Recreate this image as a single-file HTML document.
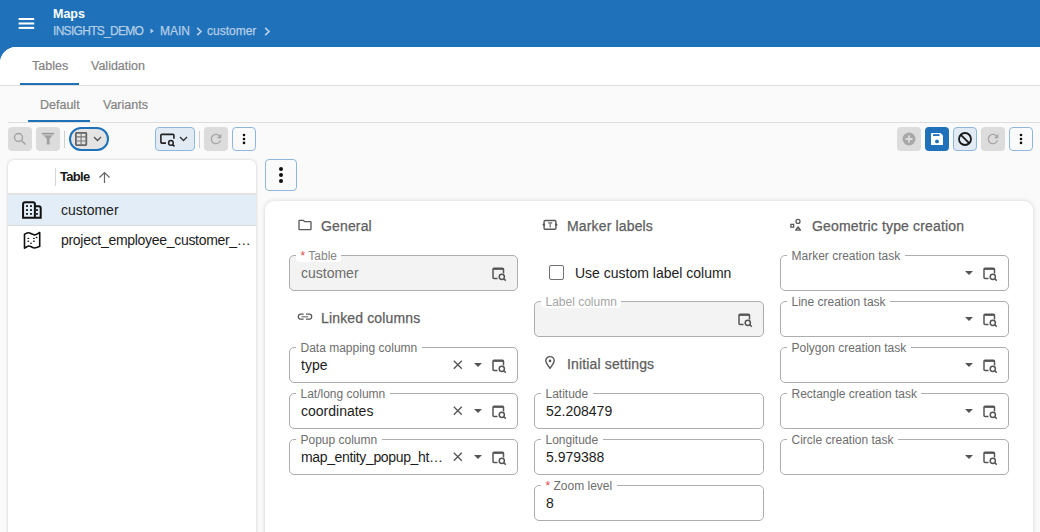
<!DOCTYPE html>
<html><head><meta charset="utf-8">
<style>
*{box-sizing:border-box;margin:0;padding:0}
html,body{width:1040px;height:532px;overflow:hidden;background:#1f72b9;font-family:"Liberation Sans",sans-serif;position:relative}
.abs{position:absolute}
svg{position:absolute;overflow:visible}
.t{position:absolute;white-space:nowrap;line-height:1}
.btn{position:absolute;width:24px;height:24px;border-radius:4px;background:#dcdcdc}
.fld{position:absolute;width:229px;height:36px;border:1px solid #adadad;border-radius:5px;background:#fff}
.fld.ro{background:#f3f3f3}
.lbl{position:absolute;left:6px;top:-5.5px;height:11px;padding:0 4.3px 0 4.5px;background:#fff;border-radius:4px;font-size:12px;line-height:11px;color:#6e6e6e;white-space:nowrap}
.lbl span{position:relative;top:0px}
.val{position:absolute;left:11px;top:10px;font-size:14px;line-height:1;color:#1c1c1c;white-space:nowrap}
.sec{position:absolute;font-size:14px;color:#5e5e5e;white-space:nowrap;line-height:1;-webkit-text-stroke:0.25px #5e5e5e;margin-top:-1px;letter-spacing:0.15px}
</style></head><body>

<div class="abs" style="left:0;top:47px;width:1040px;height:485px;background:#fafafa;border-top-left-radius:16px"></div>
<div class="abs" style="left:0;top:47px;width:1040px;height:39px;background:#fff;border-top-left-radius:16px;border-bottom:1px solid #dedede"></div>
<svg style="left:18px;top:17px" width="17" height="13"><rect x="0.6" y="1" width="15.6" height="2" fill="#fff"/><rect x="0.6" y="5.5" width="15.6" height="2" fill="#fff"/><rect x="0.6" y="9.9" width="15.6" height="2" fill="#fff"/></svg>
<div class="t" style="left:53px;top:7.5px;font-size:12.5px;font-weight:bold;color:#fff">Maps</div>
<div class="t" style="left:53px;top:25px;font-size:12px;color:#b5cde7;letter-spacing:-0.7px;-webkit-text-stroke:0.25px #b5cde7">INSIGHTS_DEMO</div>
<svg style="left:150px;top:28px" width="4" height="6"><path d="M0.5 0.5 L3.8 3 L0.5 5.5Z" fill="#b5cde7"/></svg>
<div class="t" style="left:160px;top:25px;font-size:12px;color:#b5cde7;-webkit-text-stroke:0.25px #b5cde7">MAIN</div>
<svg style="left:196px;top:27px" width="6" height="9"><path d="M1.2 0.8 L5 4.5 L1.2 8.2" stroke="#b5cde7" stroke-width="1.7" fill="none"/></svg>
<div class="t" style="left:207px;top:25px;font-size:12px;color:#b5cde7;-webkit-text-stroke:0.25px #b5cde7">customer</div>
<svg style="left:264px;top:27px" width="6" height="9"><path d="M1.2 0.8 L5 4.5 L1.2 8.2" stroke="#b5cde7" stroke-width="1.7" fill="none"/></svg>
<div class="t" style="left:32px;top:60px;font-size:12.5px;color:#838383;-webkit-text-stroke:0.2px #838383">Tables</div>
<div class="t" style="left:91px;top:60px;font-size:12.5px;color:#838383;-webkit-text-stroke:0.2px #838383">Validation</div>
<div class="abs" style="left:20px;top:83px;width:59px;height:2px;background:#1f72b9"></div>
<div class="t" style="left:40px;top:99px;font-size:12.5px;color:#838383;-webkit-text-stroke:0.2px #838383">Default</div>
<div class="t" style="left:103px;top:99px;font-size:12.5px;color:#838383;-webkit-text-stroke:0.2px #838383">Variants</div>
<div class="abs" style="left:28px;top:120px;width:62px;height:2px;background:#1f72b9"></div>
<div class="abs" style="left:8px;top:122px;width:1032px;height:1px;background:#dedede"></div>
<div class="btn" style="left:8px;top:127px"></div>
<svg style="left:8px;top:127px" width="24" height="24"><circle cx="10.5" cy="10.5" r="4" stroke="#a3a3a3" stroke-width="1.4" fill="none"/><path d="M13.5 13.5 L17.5 17.5" stroke="#a3a3a3" stroke-width="1.6"/></svg>
<div class="btn" style="left:36px;top:127px"></div>
<svg style="left:36px;top:127px" width="24" height="24"><rect x="5.9" y="5.9" width="12.1" height="1.4" fill="#979797"/><rect x="6.4" y="7.3" width="11.1" height="1.2" fill="#bcbcbc"/><path d="M7.6 8.5 H16.4 L13.6 11.8 V17.6 H10.8 V11.8Z" fill="#a0a0a0"/></svg>
<div class="abs" style="left:64px;top:131px;width:1px;height:17px;background:#cfcfcf"></div>
<div class="abs" style="left:69px;top:127px;width:40px;height:24px;border-radius:12px;border:2.5px solid #1f72b9;background:#e4e4e4"></div>
<svg style="left:75px;top:132px" width="13" height="14"><rect x="0.9" y="0.9" width="10.4" height="12.2" rx="0.5" fill="none" stroke="#666" stroke-width="1.8"/><path d="M0.8 4.9 H11.4 M0.8 9 H11.4 M6.1 0.8 V13" stroke="#777" stroke-width="1.1"/></svg>
<svg style="left:93px;top:136px" width="9" height="6"><path d="M1 1 L4.5 4.5 L8 1" stroke="#555" stroke-width="1.4" fill="none"/></svg>
<div class="abs" style="left:155px;top:127px;width:40px;height:24px;border-radius:4px;border:1px solid #8fb7de;background:#e2ebf4"></div>
<svg style="left:156px;top:130px" width="24" height="20"><path d="M10 13.1 H5.8 Q4.9 13.1 4.9 12.2 V5.3 Q4.9 4.4 5.8 4.4 H17 Q17.9 4.4 17.9 5.3 V8.8" stroke="#222" stroke-width="1.6" fill="none"/><circle cx="14.9" cy="12.9" r="2.3" stroke="#222" stroke-width="1.5" fill="none"/><path d="M16.6 14.6 L18.5 16.4" stroke="#222" stroke-width="1.5"/></svg>
<svg style="left:179px;top:136px" width="9" height="6"><path d="M1 1 L4.5 4.5 L8 1" stroke="#333" stroke-width="1.4" fill="none"/></svg>
<div class="abs" style="left:199px;top:131px;width:1px;height:17px;background:#cfcfcf"></div>
<div class="btn" style="left:204px;top:127px"></div>
<svg style="left:208px;top:131px" width="16" height="16" viewBox="0 0 24 24"><path d="M17.65 6.35C16.2 4.9 14.21 4 12 4c-4.42 0-7.99 3.58-7.99 8s3.57 8 7.99 8c3.73 0 6.84-2.550 7.73-6h-2.08c-.82 2.33-3.04 4-5.65 4-3.31 0-6-2.690-6-6s2.69-6 6-6c1.66 0 3.14.69 4.22 1.78L13 11h7V4l-2.35 2.35z" fill="#a8a8a8"/></svg>
<div class="abs" style="left:232px;top:127px;width:24px;height:24px;border-radius:4px;border:1px solid #8fb7de;background:transparent"></div>
<svg style="left:241px;top:134px" width="6" height="14"><circle cx="3" cy="1" r="1.3" fill="#111"/><circle cx="3" cy="4.95" r="1.3" fill="#111"/><circle cx="3" cy="8.9" r="1.3" fill="#111"/></svg>
<div class="btn" style="left:897px;top:127px"></div>
<svg style="left:897px;top:127px" width="24" height="24"><circle cx="12" cy="12" r="6.5" fill="#a8a8a8"/><path d="M12 8.5 V15.5 M8.5 12 H15.5" stroke="#dcdcdc" stroke-width="1.8"/></svg>
<div class="btn" style="left:925px;top:127px;background:#1f72b9"></div>
<svg style="left:925px;top:127px" width="24" height="24"><path d="M6 6.5 Q6 6 6.5 6 H15.5 L18 8.5 V17.5 Q18 18 17.5 18 H6.5 Q6 18 6 17.5Z" fill="#fff"/><rect x="8" y="7.2" width="6.5" height="1.8" fill="#1f72b9"/><circle cx="12" cy="14.4" r="1.9" fill="#1f72b9"/></svg>
<div class="abs" style="left:953px;top:127px;width:24px;height:24px;border-radius:4px;border:1px solid #8fb7de;background:#e2ebf4"></div>
<svg style="left:953px;top:127px" width="24" height="24"><circle cx="12" cy="12" r="6" stroke="#1a1a1a" stroke-width="1.8" fill="none"/><path d="M7.8 7.8 L16.2 16.2" stroke="#1a1a1a" stroke-width="1.8"/></svg>
<div class="btn" style="left:981px;top:127px"></div>
<svg style="left:985px;top:131px" width="16" height="16" viewBox="0 0 24 24"><path d="M17.65 6.35C16.2 4.9 14.21 4 12 4c-4.42 0-7.99 3.58-7.99 8s3.57 8 7.99 8c3.73 0 6.84-2.550 7.73-6h-2.08c-.82 2.33-3.04 4-5.65 4-3.31 0-6-2.690-6-6s2.69-6 6-6c1.66 0 3.14.69 4.22 1.78L13 11h7V4l-2.35 2.35z" fill="#a8a8a8"/></svg>
<div class="abs" style="left:1009px;top:127px;width:24px;height:24px;border-radius:4px;border:1px solid #8fb7de;background:transparent"></div>
<svg style="left:1018px;top:134px" width="6" height="14"><circle cx="3" cy="1" r="1.3" fill="#111"/><circle cx="3" cy="4.95" r="1.3" fill="#111"/><circle cx="3" cy="8.9" r="1.3" fill="#111"/></svg>
<div class="abs" style="left:8px;top:160px;width:248px;height:400px;background:#fff;border-radius:6px;box-shadow:0 0 3px rgba(0,0,0,.2)"></div>
<div class="abs" style="left:55px;top:168px;width:1px;height:18px;background:#d6d6d6"></div>
<div class="t" style="left:60px;top:170px;font-size:13px;font-weight:bold;color:#1a1a1a;letter-spacing:-0.7px">Table</div>
<svg style="left:98px;top:171px" width="13" height="13"><path d="M6.5 12 V1.5 M1.5 6.5 L6.5 1.5 L11.5 6.5" stroke="#666" stroke-width="1.2" fill="none"/></svg>
<div class="abs" style="left:8px;top:193px;width:248px;height:2px;background:#e2e2e2"></div>
<div class="abs" style="left:8px;top:195px;width:248px;height:30px;background:#e3edf7"></div>
<div class="abs" style="left:8px;top:225px;width:248px;height:1px;background:#dcdcdc"></div>
<svg style="left:20px;top:199px" width="24" height="22"><path d="M3.07 18.65 V5.3 A2 2 0 0 1 5.07 3.3 H12.9 A2 2 0 0 1 14.9 5.3 V18.65 M14.9 7.2 H18.7 A2 2 0 0 1 20.7 9.2 V18.65 M2.07 18.65 H21.7" stroke="#111" stroke-width="2" fill="none"/><rect x="6.05" y="6.05" width="1.9" height="1.9" rx="0.4" fill="#111"/><rect x="10.05" y="6.05" width="1.9" height="1.9" rx="0.4" fill="#111"/><rect x="6.05" y="10.05" width="1.9" height="1.9" rx="0.4" fill="#111"/><rect x="10.05" y="10.05" width="1.9" height="1.9" rx="0.4" fill="#111"/><rect x="6.05" y="13.950000000000001" width="1.9" height="1.9" rx="0.4" fill="#111"/><rect x="10.05" y="13.950000000000001" width="1.9" height="1.9" rx="0.4" fill="#111"/><rect x="16.05" y="10.05" width="1.9" height="1.9" rx="0.4" fill="#111"/><rect x="16.05" y="13.950000000000001" width="1.9" height="1.9" rx="0.4" fill="#111"/></svg>
<div class="t" style="left:61px;top:203px;font-size:14px;color:#1c1c1c">customer</div>
<svg style="left:20px;top:229px" width="24" height="22"><path d="M4.5 19.2 V5.3 C6 4.5 7.3 3.6 8.5 3.7 C10.5 3.9 12.5 5.8 14.5 5.9 C16.5 6 18.2 4.2 19.7 3.5 V17.4 C18.2 18.1 16.5 19 14.5 19 C12.5 19 11 17 9 17 C7.5 17 6 18.5 4.5 19.2 Z" stroke="#111" stroke-width="1.6" fill="none" stroke-linejoin="round"/><ellipse cx="8.3" cy="9.4" rx="0.95" ry="0.7" fill="#111"/><ellipse cx="13.9" cy="9.4" rx="0.95" ry="0.7" fill="#111"/><ellipse cx="8.3" cy="12.3" rx="0.95" ry="0.7" fill="#111"/><ellipse cx="13.9" cy="12.3" rx="0.95" ry="0.7" fill="#111"/><ellipse cx="11" cy="14.2" rx="0.95" ry="0.7" fill="#111"/><ellipse cx="16.6" cy="8.5" rx="0.95" ry="0.7" fill="#111"/></svg>
<div class="t" style="left:61px;top:231px;font-size:14px;line-height:18px;color:#1c1c1c;width:191px;overflow:hidden;text-overflow:ellipsis;letter-spacing:-0.3px">project_employee_customer_map</div>
<div class="abs" style="left:265px;top:159px;width:32px;height:32px;border-radius:4px;border:1px solid #8fb7de;background:transparent"></div>
<svg style="left:278px;top:166px" width="6" height="18"><circle cx="3" cy="3" r="2" fill="#111"/><circle cx="3" cy="9" r="2" fill="#111"/><circle cx="3" cy="15" r="2" fill="#111"/></svg>
<div class="abs" style="left:265px;top:201px;width:768px;height:400px;background:#fff;border-radius:9px;box-shadow:0 0 4px rgba(0,0,0,.17)"></div>
<div class="sec" style="left:321px;top:220px">General</div>
<svg style="left:297px;top:217px" width="16" height="16" viewBox="0 0 24 24"><path d="M9.17 6l2 2H20v10H4V6h5.17M10 4H4c-1.1 0-1.99.9-1.99 2L2 18c0 1.1.9 2 2 2h16c1.1 0 2-.9 2-2V8c0-1.1-.9-2-2-2h-8l-2-2z" fill="#595959"/></svg>
<div class="fld ro" style="left:289px;top:255px;width:229px"><div class="lbl" style="color:#858585;"><span><span style="color:#e5484d">* </span>Table</span></div><div class="val" style="color:#6c6c6c;">customer</div></div>
<svg style="left:492px;top:267px" width="15" height="14"><path d="M5.5 11.5 H2 Q1 11.5 1 10.5 V2.2 Q1 1.2 2 1.2 H10.5 Q11.5 1.2 11.5 2.2 V6.6" stroke="#555" stroke-width="1.5" fill="none"/><path d="M1.3 2.3 H11.2" stroke="#555" stroke-width="1.2"/><circle cx="9.8" cy="9.8" r="2.6" stroke="#555" stroke-width="1.5" fill="none"/><path d="M11.7 11.7 L13.8 13.6" stroke="#555" stroke-width="1.5"/></svg>
<div class="sec" style="left:321px;top:312px">Linked columns</div>
<svg style="left:292px;top:306px" width="24" height="22"><path d="M11.6 8.2 H8.8 A2.5 2.5 0 0 0 8.8 13.2 H11.6 M14 8.2 H17.2 A2.5 2.5 0 0 1 17.2 13.2 H14" stroke="#595959" stroke-width="1.3" fill="none"/><path d="M9.6 10.75 H16.2" stroke="#777" stroke-width="1.2"/></svg>
<div class="fld" style="left:289px;top:347px;width:229px"><div class="lbl" style=""><span>Data mapping column</span></div><div class="val" style="">type</div></div>
<svg style="left:453px;top:360px" width="10" height="10"><path d="M0.8 0.8 L8.8 8.8 M8.8 0.8 L0.8 8.8" stroke="#555" stroke-width="1.3"/></svg>
<svg style="left:474px;top:363px" width="8" height="5"><path d="M0 0 H8 L4 4Z" fill="#555"/></svg>
<svg style="left:492px;top:359px" width="15" height="14"><path d="M5.5 11.5 H2 Q1 11.5 1 10.5 V2.2 Q1 1.2 2 1.2 H10.5 Q11.5 1.2 11.5 2.2 V6.6" stroke="#555" stroke-width="1.5" fill="none"/><path d="M1.3 2.3 H11.2" stroke="#555" stroke-width="1.2"/><circle cx="9.8" cy="9.8" r="2.6" stroke="#555" stroke-width="1.5" fill="none"/><path d="M11.7 11.7 L13.8 13.6" stroke="#555" stroke-width="1.5"/></svg>
<div class="fld" style="left:289px;top:393px;width:229px"><div class="lbl" style=""><span>Lat/long column</span></div><div class="val" style="">coordinates</div></div>
<svg style="left:453px;top:406px" width="10" height="10"><path d="M0.8 0.8 L8.8 8.8 M8.8 0.8 L0.8 8.8" stroke="#555" stroke-width="1.3"/></svg>
<svg style="left:474px;top:409px" width="8" height="5"><path d="M0 0 H8 L4 4Z" fill="#555"/></svg>
<svg style="left:492px;top:405px" width="15" height="14"><path d="M5.5 11.5 H2 Q1 11.5 1 10.5 V2.2 Q1 1.2 2 1.2 H10.5 Q11.5 1.2 11.5 2.2 V6.6" stroke="#555" stroke-width="1.5" fill="none"/><path d="M1.3 2.3 H11.2" stroke="#555" stroke-width="1.2"/><circle cx="9.8" cy="9.8" r="2.6" stroke="#555" stroke-width="1.5" fill="none"/><path d="M11.7 11.7 L13.8 13.6" stroke="#555" stroke-width="1.5"/></svg>
<div class="fld" style="left:289px;top:439px;width:229px"><div class="lbl" style=""><span>Popup column</span></div><div class="val" style=""><span style="letter-spacing:-0.35px">map_entity_popup_ht…</span></div></div>
<svg style="left:453px;top:452px" width="10" height="10"><path d="M0.8 0.8 L8.8 8.8 M8.8 0.8 L0.8 8.8" stroke="#555" stroke-width="1.3"/></svg>
<svg style="left:474px;top:455px" width="8" height="5"><path d="M0 0 H8 L4 4Z" fill="#555"/></svg>
<svg style="left:492px;top:451px" width="15" height="14"><path d="M5.5 11.5 H2 Q1 11.5 1 10.5 V2.2 Q1 1.2 2 1.2 H10.5 Q11.5 1.2 11.5 2.2 V6.6" stroke="#555" stroke-width="1.5" fill="none"/><path d="M1.3 2.3 H11.2" stroke="#555" stroke-width="1.2"/><circle cx="9.8" cy="9.8" r="2.6" stroke="#555" stroke-width="1.5" fill="none"/><path d="M11.7 11.7 L13.8 13.6" stroke="#555" stroke-width="1.5"/></svg>
<div class="sec" style="left:567px;top:220px">Marker labels</div>
<svg style="left:538px;top:214px" width="24" height="22"><rect x="6.1" y="6.5" width="11.8" height="8.7" rx="1" stroke="#595959" stroke-width="1.4" fill="none"/><path d="M4.3 10.8 L5.8 9.3 L7.3 10.8 L5.8 12.3Z M16.7 10.8 L18.2 9.3 L19.7 10.8 L18.2 12.3Z" fill="#595959"/><rect x="10.2" y="8.3" width="4" height="1.3" fill="#666"/><rect x="11.55" y="9.5" width="1.3" height="4" fill="#777"/></svg>
<div class="abs" style="left:549px;top:265px;width:15px;height:15px;border:1.6px solid #707070;border-radius:2px"></div>
<div class="t" style="left:575px;top:266px;font-size:14px;color:#1c1c1c">Use custom label column</div>
<div class="fld ro" style="left:534px;top:301px;width:230px"><div class="lbl" style="color:#a5a5a5;"><span>Label column</span></div></div>
<svg style="left:738px;top:313px" width="15" height="14"><path d="M5.5 11.5 H2 Q1 11.5 1 10.5 V2.2 Q1 1.2 2 1.2 H10.5 Q11.5 1.2 11.5 2.2 V6.6" stroke="#555" stroke-width="1.5" fill="none"/><path d="M1.3 2.3 H11.2" stroke="#555" stroke-width="1.2"/><circle cx="9.8" cy="9.8" r="2.6" stroke="#555" stroke-width="1.5" fill="none"/><path d="M11.7 11.7 L13.8 13.6" stroke="#555" stroke-width="1.5"/></svg>
<div class="sec" style="left:567px;top:358px">Initial settings</div>
<svg style="left:545px;top:356px" width="11" height="13"><path d="M5 12.3 C2.5 9 0.8 6.8 0.8 4.8 A4.2 4.2 0 0 1 9.2 4.8 C9.2 6.8 7.5 9 5 12.3Z" stroke="#555" stroke-width="1.4" fill="none"/><circle cx="5" cy="4.9" r="1.3" fill="#555"/></svg>
<div class="fld" style="left:534px;top:393px;width:230px"><div class="lbl"><span>Latitude</span></div><div class="val">52.208479</div></div>
<div class="fld" style="left:534px;top:439px;width:230px"><div class="lbl"><span>Longitude</span></div><div class="val">5.979388</div></div>
<div class="fld" style="left:534px;top:485px;width:230px"><div class="lbl"><span><span style="color:#e5484d">* </span>Zoom level</span></div><div class="val">8</div></div>
<div class="sec" style="left:812px;top:220px">Geometric type creation</div>
<svg style="left:784px;top:214px" width="24" height="22"><rect x="6.85" y="10.35" width="2.8" height="2.8" stroke="#595959" stroke-width="1.3" fill="none"/><circle cx="14" cy="7.4" r="2" stroke="#595959" stroke-width="1.3" fill="none"/><path d="M14.1 12.9 L16.5 16.1 H11.7Z" stroke="#595959" stroke-width="1.4" fill="none" stroke-linejoin="round"/></svg>
<div class="fld" style="left:780px;top:255px;width:229px"><div class="lbl" style=""><span>Marker creation task</span></div></div>
<svg style="left:965px;top:271px" width="8" height="5"><path d="M0 0 H8 L4 4Z" fill="#555"/></svg>
<svg style="left:983px;top:267px" width="15" height="14"><path d="M5.5 11.5 H2 Q1 11.5 1 10.5 V2.2 Q1 1.2 2 1.2 H10.5 Q11.5 1.2 11.5 2.2 V6.6" stroke="#555" stroke-width="1.5" fill="none"/><path d="M1.3 2.3 H11.2" stroke="#555" stroke-width="1.2"/><circle cx="9.8" cy="9.8" r="2.6" stroke="#555" stroke-width="1.5" fill="none"/><path d="M11.7 11.7 L13.8 13.6" stroke="#555" stroke-width="1.5"/></svg>
<div class="fld" style="left:780px;top:301px;width:229px"><div class="lbl" style=""><span>Line creation task</span></div></div>
<svg style="left:965px;top:317px" width="8" height="5"><path d="M0 0 H8 L4 4Z" fill="#555"/></svg>
<svg style="left:983px;top:313px" width="15" height="14"><path d="M5.5 11.5 H2 Q1 11.5 1 10.5 V2.2 Q1 1.2 2 1.2 H10.5 Q11.5 1.2 11.5 2.2 V6.6" stroke="#555" stroke-width="1.5" fill="none"/><path d="M1.3 2.3 H11.2" stroke="#555" stroke-width="1.2"/><circle cx="9.8" cy="9.8" r="2.6" stroke="#555" stroke-width="1.5" fill="none"/><path d="M11.7 11.7 L13.8 13.6" stroke="#555" stroke-width="1.5"/></svg>
<div class="fld" style="left:780px;top:347px;width:229px"><div class="lbl" style=""><span>Polygon creation task</span></div></div>
<svg style="left:965px;top:363px" width="8" height="5"><path d="M0 0 H8 L4 4Z" fill="#555"/></svg>
<svg style="left:983px;top:359px" width="15" height="14"><path d="M5.5 11.5 H2 Q1 11.5 1 10.5 V2.2 Q1 1.2 2 1.2 H10.5 Q11.5 1.2 11.5 2.2 V6.6" stroke="#555" stroke-width="1.5" fill="none"/><path d="M1.3 2.3 H11.2" stroke="#555" stroke-width="1.2"/><circle cx="9.8" cy="9.8" r="2.6" stroke="#555" stroke-width="1.5" fill="none"/><path d="M11.7 11.7 L13.8 13.6" stroke="#555" stroke-width="1.5"/></svg>
<div class="fld" style="left:780px;top:393px;width:229px"><div class="lbl" style=""><span>Rectangle creation task</span></div></div>
<svg style="left:965px;top:409px" width="8" height="5"><path d="M0 0 H8 L4 4Z" fill="#555"/></svg>
<svg style="left:983px;top:405px" width="15" height="14"><path d="M5.5 11.5 H2 Q1 11.5 1 10.5 V2.2 Q1 1.2 2 1.2 H10.5 Q11.5 1.2 11.5 2.2 V6.6" stroke="#555" stroke-width="1.5" fill="none"/><path d="M1.3 2.3 H11.2" stroke="#555" stroke-width="1.2"/><circle cx="9.8" cy="9.8" r="2.6" stroke="#555" stroke-width="1.5" fill="none"/><path d="M11.7 11.7 L13.8 13.6" stroke="#555" stroke-width="1.5"/></svg>
<div class="fld" style="left:780px;top:439px;width:229px"><div class="lbl" style=""><span>Circle creation task</span></div></div>
<svg style="left:965px;top:455px" width="8" height="5"><path d="M0 0 H8 L4 4Z" fill="#555"/></svg>
<svg style="left:983px;top:451px" width="15" height="14"><path d="M5.5 11.5 H2 Q1 11.5 1 10.5 V2.2 Q1 1.2 2 1.2 H10.5 Q11.5 1.2 11.5 2.2 V6.6" stroke="#555" stroke-width="1.5" fill="none"/><path d="M1.3 2.3 H11.2" stroke="#555" stroke-width="1.2"/><circle cx="9.8" cy="9.8" r="2.6" stroke="#555" stroke-width="1.5" fill="none"/><path d="M11.7 11.7 L13.8 13.6" stroke="#555" stroke-width="1.5"/></svg>
</body></html>
